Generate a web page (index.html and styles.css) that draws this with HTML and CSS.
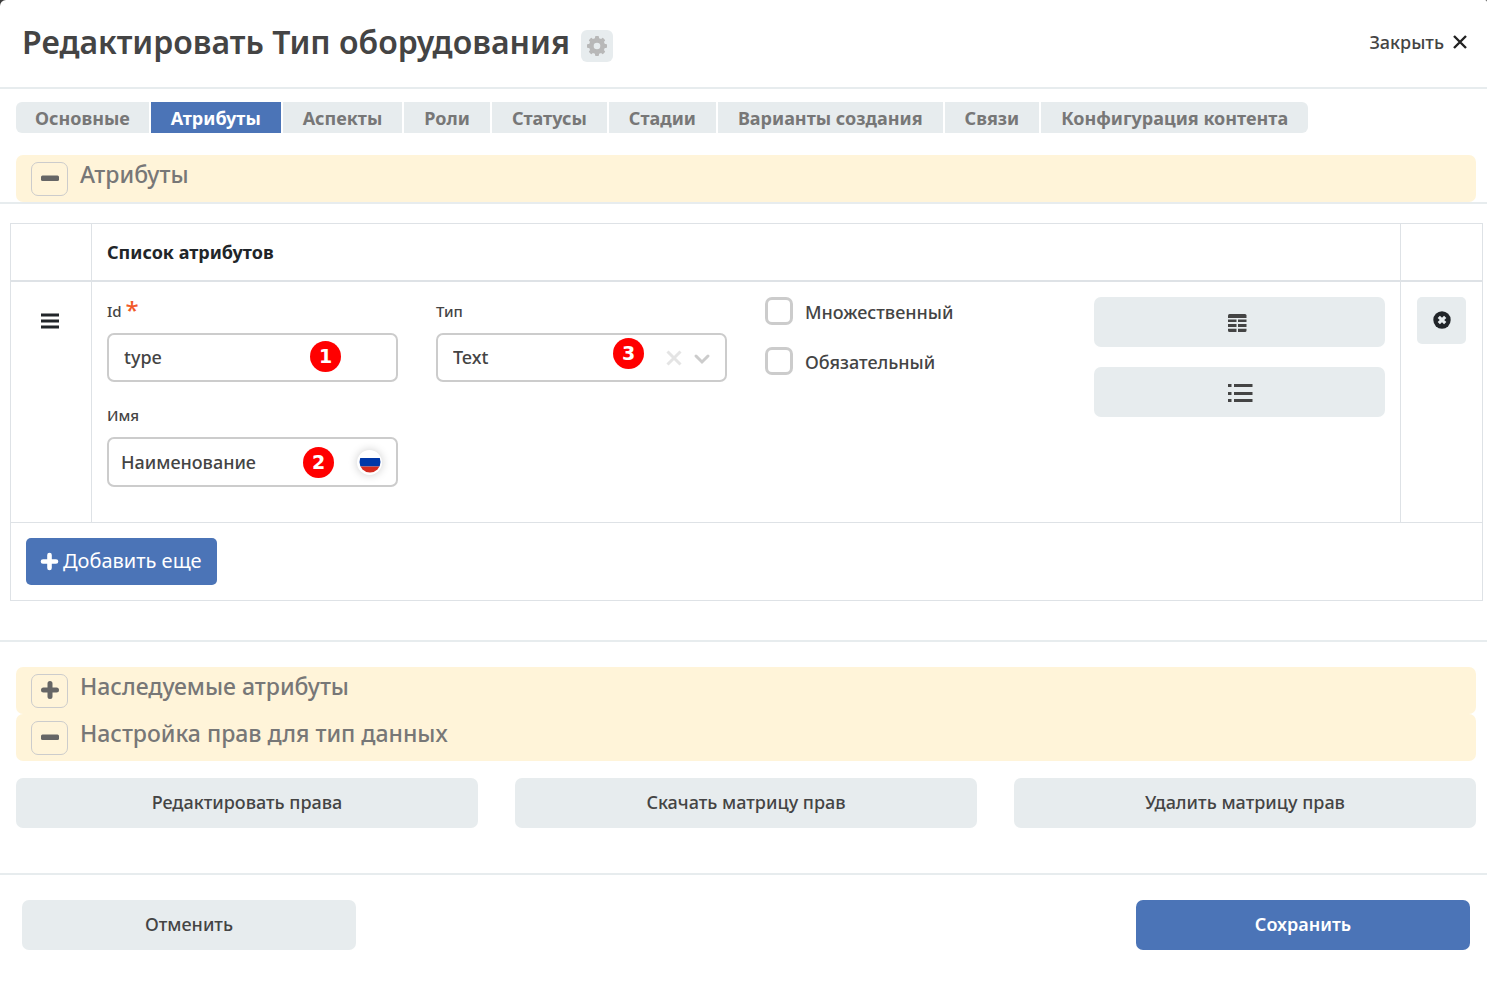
FILE: index.html
```html
<!DOCTYPE html>
<html lang="ru">
<head>
<meta charset="utf-8">
<meta name="viewport" content="width=device-width, initial-scale=1">
<title>Редактировать Тип оборудования</title>
<link rel="stylesheet" href="styles.css">
</head>
<body>
<div class="dialog">
  <header class="dialog-header">
    <h1 class="dialog-title">Редактировать Тип оборудования</h1>
    <button class="settings-btn" type="button" aria-label="Настройки">
      <svg width="22" height="22" viewBox="0 0 22 22" aria-hidden="true"><g fill="#b8b8b8"><circle cx="11" cy="11" r="8"/><rect x="9" y="1" width="4" height="20" rx="1"/><rect x="9" y="1" width="4" height="20" rx="1" transform="rotate(45 11 11)"/><rect x="9" y="1" width="4" height="20" rx="1" transform="rotate(90 11 11)"/><rect x="9" y="1" width="4" height="20" rx="1" transform="rotate(135 11 11)"/></g><circle cx="11" cy="11" r="3.300" fill="#e7ecee"/></svg>
    </button>
    <button class="close-btn" type="button">Закрыть
      <svg width="14" height="14" viewBox="0 0 14 14" aria-hidden="true"><path d="M1 1l12 12M13 1l-12 12" stroke="#222" stroke-width="2.400" fill="none"/></svg>
    </button>
  </header>

  <nav class="tabs">
    <a class="tab" href="#main">Основные</a>
    <a class="tab tab-active" href="#attributes" aria-current="page">Атрибуты</a>
    <a class="tab" href="#aspects">Аспекты</a>
    <a class="tab" href="#roles">Роли</a>
    <a class="tab" href="#statuses">Статусы</a>
    <a class="tab" href="#stages">Стадии</a>
    <a class="tab" href="#variants">Варианты создания</a>
    <a class="tab" href="#links">Связи</a>
    <a class="tab" href="#content">Конфигурация контента</a>
  </nav>

  <section class="attributes" id="attributes">
    <div class="section-bar">
      <button class="toggle-btn" type="button" aria-label="Свернуть атрибуты"><svg width="20" height="20" viewBox="0 0 20 20" aria-hidden="true"><rect x="1" y="6.500" width="18" height="5.500" rx="1.500" fill="#666"/></svg></button>
      <h2 class="section-title">Атрибуты</h2>
    </div>
    <div class="section-body">
      <table class="attr-table">
        <thead>
          <tr><th class="col-drag"></th><th>Список атрибутов</th><th class="col-remove"></th></tr>
        </thead>
        <tbody>
          <tr>
            <td class="drag-cell">
              <svg width="18" height="16" viewBox="0 0 18 16" aria-hidden="true"><path d="M0 2h18M0 8h18M0 14h18" stroke="#212529" stroke-width="2.800"/></svg>
            </td>
            <td>
              <div class="attr-grid">
                <div class="fields">
                  <div class="field">
                    <label class="field-label" for="attr-id">Id <span class="required">*</span></label>
                    <div class="control">
                      <input class="text-input" id="attr-id" type="text" value="type">
                      <span class="marker marker-1">1</span>
                    </div>
                  </div>
                  <div class="field">
                    <label class="field-label" for="attr-name">Имя</label>
                    <div class="control">
                      <input class="text-input name-input" id="attr-name" type="text" value="Наименование">
                      <span class="marker marker-2">2</span>
                      <button class="lang-btn" type="button" aria-label="Русский">
                        <svg width="22" height="22" viewBox="0 0 22 22" aria-hidden="true"><defs><clipPath id="flag-clip"><circle cx="11" cy="11" r="10.500"/></clipPath></defs><g clip-path="url(#flag-clip)"><rect width="22" height="7" fill="#fff"/><rect y="7" width="22" height="8.500" fill="#0038a8"/><rect y="15.500" width="22" height="7" fill="#d52b1e"/></g></svg>
                      </button>
                    </div>
                  </div>
                </div>
                <div class="fields">
                  <div class="field">
                    <label class="field-label" for="attr-type">Тип</label>
                    <div class="control">
                      <select class="text-input select-input" id="attr-type"><option>Text</option></select>
                      <span class="marker marker-3">3</span>
                      <span class="select-icons">
                        <svg width="16" height="16" viewBox="0 0 16 16" aria-hidden="true"><path d="M1.500 1.500l13 13M14.500 1.500l-13 13" stroke="#e4e4e4" stroke-width="3" fill="none"/></svg>
                        <svg width="16" height="16" viewBox="0 0 16 16" aria-hidden="true"><path d="M2 6l6 6 6-6" stroke="#ccc" stroke-width="3" stroke-linecap="round" fill="none"/></svg>
                      </span>
                    </div>
                  </div>
                </div>
                <div class="checks">
                  <label class="check"><input class="check-box" type="checkbox">Множественный</label>
                  <label class="check"><input class="check-box" type="checkbox">Обязательный</label>
                </div>
                <div class="actions">
                  <button class="btn icon-btn" type="button" aria-label="Таблица">
                    <svg width="24" height="18" viewBox="0 0 24 18" aria-hidden="true"><g fill="#444"><path d="M0 1.500Q0 0 1.500 0h15.500Q18.500 0 18.500 1.500V4H0z"/><path d="M0 5.500h8.500V8H0zM10 5.500h8.500V8H10zM0 10h8.500v3H0zM10 10h8.500v3H10zM0 14.800h8.500V18h-7Q0 18 0 16.500zM10 14.800h8.500v1.700Q18.500 18 17 18h-7z"/></g></svg>
                  </button>
                  <button class="btn icon-btn" type="button" aria-label="Список">
                    <svg width="24" height="18" viewBox="0 0 24 18" aria-hidden="true"><path d="M0 0h3.500v3H0zM6 0h18.500v3H6zM0 8h3.500v3H0zM6 8h18.500v3H6zM0 15h3.500v3H0zM6 15h18.500v3H6z" fill="#444"/></svg>
                  </button>
                </div>
              </div>
            </td>
            <td class="remove-cell">
              <button class="remove-btn" type="button" aria-label="Удалить">
                <svg width="18" height="18" viewBox="0 0 18 18" aria-hidden="true"><circle cx="9" cy="9" r="8.700" fill="#212529"/><path d="M5.800 5.800l6.400 6.400M12.200 5.800l-6.400 6.400" stroke="#e7ecee" stroke-width="3.200"/></svg>
              </button>
            </td>
          </tr>
        </tbody>
        <tfoot>
          <tr>
            <td colspan="3">
              <button class="add-btn" type="button"><svg width="17" height="17" viewBox="0 0 17 17" aria-hidden="true"><path d="M8.500 2v13M2 8.500h13" stroke="#fff" stroke-width="4.600" stroke-linecap="round"/></svg>Добавить еще</button>
            </td>
          </tr>
        </tfoot>
      </table>
    </div>
  </section>

  <section class="rights">
    <div class="section-bar">
      <button class="toggle-btn" type="button" aria-label="Развернуть наследуемые атрибуты"><svg width="20" height="20" viewBox="0 0 20 20" aria-hidden="true"><path d="M10 2.500v13M3.500 9h13" stroke="#666" stroke-width="5" stroke-linecap="round"/></svg></button>
      <h2 class="section-title">Наследуемые атрибуты</h2>
    </div>
    <div class="section-bar">
      <button class="toggle-btn" type="button" aria-label="Свернуть настройку прав"><svg width="20" height="20" viewBox="0 0 20 20" aria-hidden="true"><rect x="1" y="6.500" width="18" height="5.500" rx="1.500" fill="#666"/></svg></button>
      <h2 class="section-title">Настройка прав для тип данных</h2>
    </div>
    <div class="rights-actions">
      <button class="btn" type="button">Редактировать права</button>
      <button class="btn" type="button">Скачать матрицу прав</button>
      <button class="btn" type="button">Удалить матрицу прав</button>
    </div>
  </section>

  <footer class="dialog-footer">
    <button class="btn footer-btn" type="button">Отменить</button>
    <button class="btn footer-btn btn-primary" type="submit">Сохранить</button>
  </footer>
</div>
</body>
</html>
```

FILE: styles.css
```css
*, *::before, *::after { box-sizing: border-box; }

html { background: #3c3c3c; }

body {
  margin: 0;
  font-family: "Noto Sans", "Open Sans", sans-serif;
  font-size: 18px;
  line-height: 24px;
  color: #444;
}

button, input, select { font: inherit; color: inherit; }
button { border: 0; padding: 0; background: none; cursor: pointer; }
svg { display: block; overflow: visible; flex: none; }

.dialog {
  min-height: 100vh;
  background: #fff;
  border-radius: 6px 2px 0 0;
}

.dialog-header {
  display: flex;
  align-items: center;
  gap: 11px;
  height: 89px;
  padding: 0 20px 3px 22px;
  border-bottom: 2px solid #e7ecee;
}
.dialog-title {
  margin: 0;
  font-size: 32px;
  line-height: 40px;
  font-weight: 600;
  color: #444;
}
.settings-btn {
  display: grid;
  place-items: center;
  width: 32px;
  height: 32px;
  margin-top: 8px;
  border-radius: 6px;
  background: #e7ecee;
}
.close-btn {
  display: flex;
  align-items: center;
  gap: 9px;
  margin-left: auto;
  font-weight: 500;
}

.tabs {
  display: flex;
  flex-wrap: wrap;
  gap: 2px;
  padding: 13px 16px 22px;
}
.tab {
  padding: 4px 20px 3px;
  background: #e7ecee;
  color: #777;
  font-weight: 700;
  text-decoration: none;
}
.tab:first-child { padding: 4px 19px 3px; border-radius: 6px 0 0 6px; }
.tab:last-child { border-radius: 0 6px 6px 0; }
.tab-active { background: #4b74b7; color: #fff; }

.section-bar {
  display: flex;
  align-items: flex-start;
  gap: 12px;
  height: 47px;
  margin: 0 11px 0 16px;
  padding: 4px 15px;
  border-radius: 7px;
  background: #fff4d9;
}
.toggle-btn {
  display: grid;
  place-items: center;
  width: 37px;
  height: 34px;
  margin-top: 3px;
  border: 1px solid #ccc;
  border-radius: 7px;
}
.section-title {
  margin: 0;
  font-size: 23px;
  line-height: 30px;
  font-weight: 500;
  color: #777;
}
.section-body {
  padding: 19px 4px 39px 10px;
  border-top: 2px solid #e7ecee;
  border-bottom: 2px solid #e7ecee;
}

.attr-table {
  width: 100%;
  border-collapse: collapse;
  table-layout: fixed;
}
.attr-table th, .attr-table td {
  padding: 15px;
  border: 1px solid #dee2e6;
  text-align: left;
  vertical-align: top;
}
.attr-table th {
  height: 57px;
  padding: 16px 15px 15px;
  border-bottom-width: 2px;
  font-weight: 700;
  color: #212529;
}
.attr-table .col-drag { width: 81px; }
.attr-table .col-remove { width: 82px; }
.attr-table .drag-cell { padding: 31px 30px; }
.attr-table .remove-cell { padding-left: 16px; }

.attr-grid {
  display: grid;
  grid-template-columns: repeat(4, minmax(0, 1fr));
  column-gap: 38px;
  min-height: 210px;
}
.fields { display: grid; align-content: start; gap: 19px; }
.field-label {
  display: block;
  height: 36px;
  font-size: 15px;
  line-height: 28px;
  font-weight: 500;
}
.required { font-size: 24px; line-height: 24px; font-weight: 500; vertical-align: -2px; color: #f15a29; }
.control { position: relative; }
.text-input {
  display: block;
  width: 100%;
  height: 49px;
  padding: 0 15px;
  border: 2px solid #ccc;
  border-radius: 7px;
  background: #fff;
  font-weight: 500;
  outline: 0;
}
.name-input { height: 50px; padding: 0 12px; }
.select-input { appearance: none; }

.marker {
  position: absolute;
  display: grid;
  place-items: center;
  width: 31px;
  height: 31px;
  border-radius: 50%;
  background: #f00;
  color: #fff;
  font: 700 19px/24px "DejaVu Sans", sans-serif;
}
.marker-1 { top: 8px; right: 57px; }
.marker-2 { top: 10px; right: 64px; }
.marker-3 { top: 5px; right: 83px; }

.lang-btn {
  position: absolute;
  top: 13px;
  right: 16px;
  display: grid;
  place-items: center;
  width: 25px;
  height: 25px;
  border-radius: 50%;
  background: #fff;
  box-shadow: 0 0 10px rgba(0, 0, 0, .2);
}
.select-icons {
  position: absolute;
  top: 17px;
  right: 17px;
  display: flex;
  gap: 12px;
  pointer-events: none;
}

.checks { display: grid; align-content: start; gap: 20px; }
.check { display: flex; align-items: center; gap: 12px; height: 30px; font-weight: 500; }
.check-box {
  appearance: none;
  flex: none;
  width: 28px;
  height: 28px;
  margin: 0 0 2px;
  border: 3px solid #ccc;
  border-radius: 7px;
}

.actions { display: grid; align-content: start; gap: 20px; }
.btn {
  height: 50px;
  padding-bottom: 2px;
  border-radius: 7px;
  background: #e7ecee;
  font-weight: 500;
}
.icon-btn { display: grid; place-items: center; padding: 2px 0 0; }
.remove-btn {
  display: grid;
  place-items: center;
  width: 49px;
  height: 47px;
  border-radius: 5px;
  background: #e7ecee;
}
.add-btn {
  display: flex;
  align-items: center;
  gap: 5px;
  height: 47px;
  padding: 0 15px;
  border-radius: 5px;
  background: #4b74b7;
  color: #fff;
  font-size: 20px;
}

.rights { padding-top: 25px; }
.rights-actions {
  display: grid;
  grid-template-columns: repeat(3, minmax(0, 1fr));
  gap: 37px;
  padding: 17px 11px 45px 16px;
}

.dialog-footer {
  display: flex;
  justify-content: space-between;
  padding: 25px 17px 39px 22px;
  border-top: 2px solid #e7ecee;
}
.footer-btn { width: 334px; }
.btn-primary { background: #4b74b7; color: #fff; font-weight: 600; }
```
